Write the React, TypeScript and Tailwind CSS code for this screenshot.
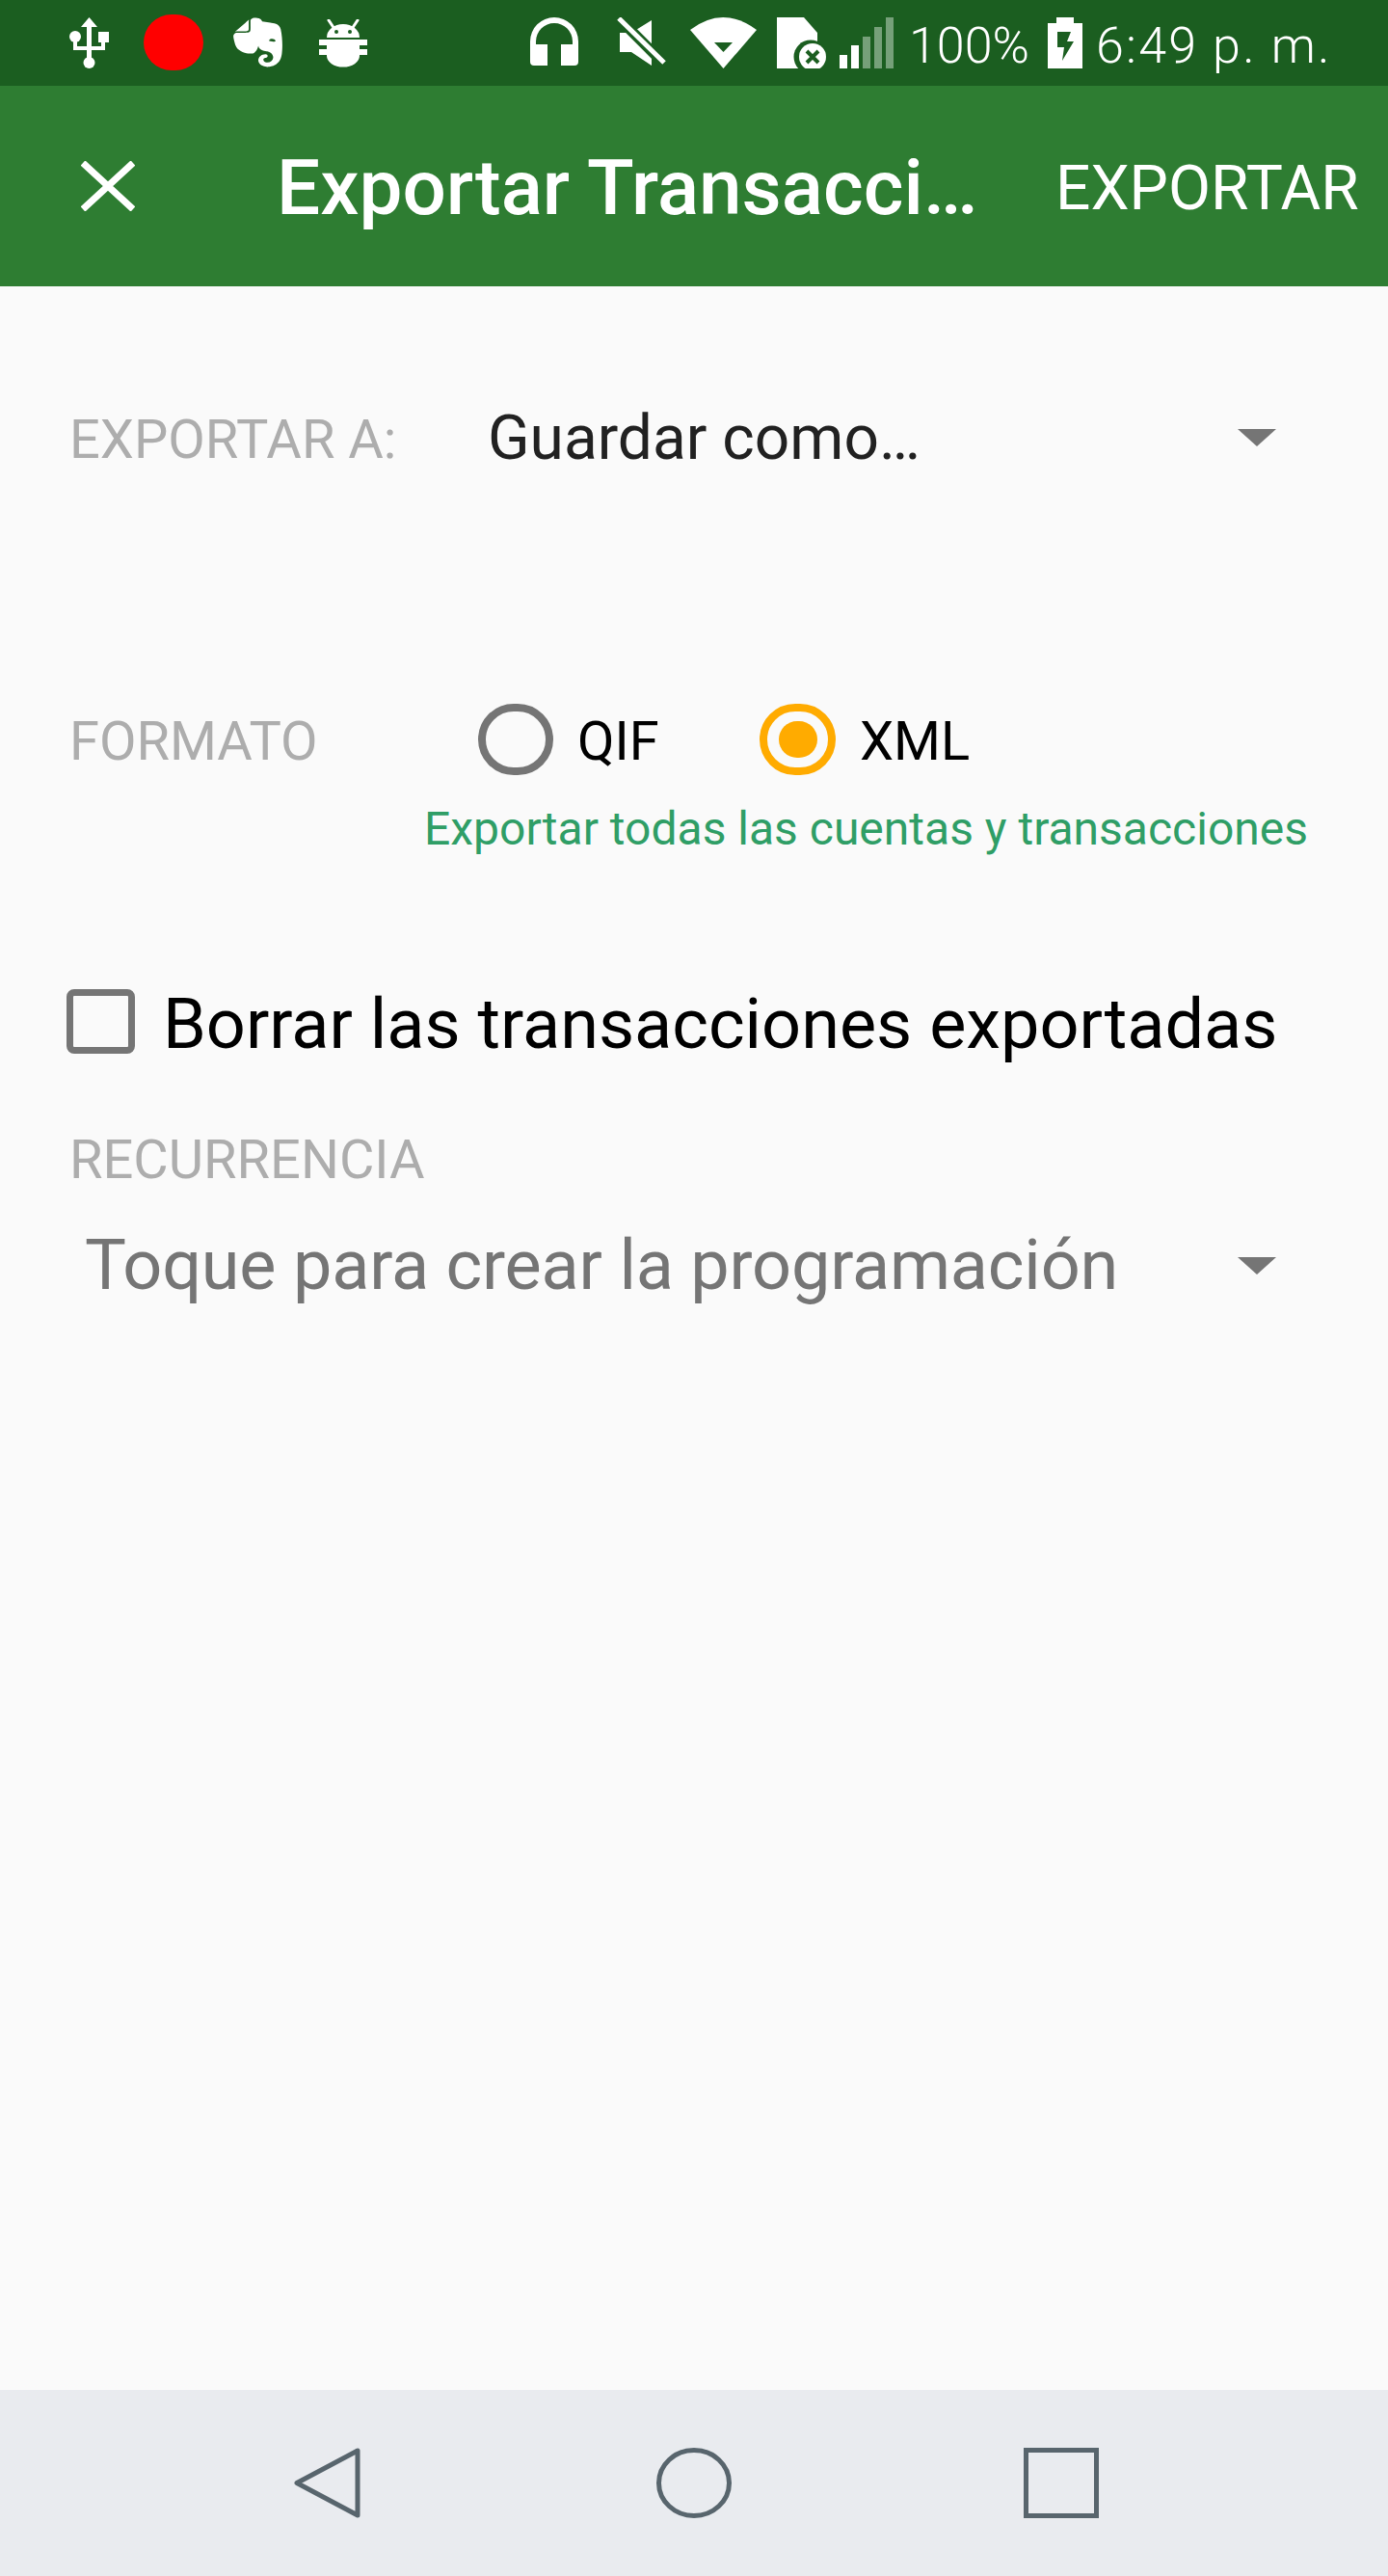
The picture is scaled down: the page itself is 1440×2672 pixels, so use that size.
import { FaEvernote } from 'react-icons/fa'

function DropArrow() {
  return (
    <svg width="40" height="18" viewBox="0 0 40 18" className="shrink-0">
      <path d="M0 0H40L20 18Z" fill="#757575" />
    </svg>
  )
}

function StatusBar() {
  return (
    <div className="h-[89px] shrink-0 bg-[#1b5e20] flex items-start pt-[15px] text-white">
      {/* usb */}
      <svg width="41" height="53" viewBox="0 0 41 53" className="ml-[72px] mt-[3px]" fill="#fff">
        <path d="M20.500 0L29 10H23V44H18V10H12Z" />
        <circle cx="20.500" cy="47" r="6" />
        <circle cx="6" cy="20" r="6" />
        <rect x="4" y="20" width="4" height="14" />
        <rect x="30" y="15" width="11" height="11" />
        <rect x="33" y="24" width="4" height="10" />
        <path d="M4 30H37V34H8Q4 34 4 30Z" />
      </svg>
      <div className="ml-[36px] w-[62px] h-[58px] rounded-full bg-[#ff0000]" />
      <FaEvernote preserveAspectRatio="none" className="ml-[31px] w-[51px] h-[58px]" />
      {/* android bug */}
      <svg width="50" height="50" viewBox="0 0 50 50" className="ml-[38px] mt-[5px]" fill="#fff">
        <path d="M10 1l6 9M40 1l-6 9" stroke="#fff" strokeWidth="3" strokeLinecap="round" />
        <path d="M8 19a17 14 0 0 1 34 0z" />
        <circle cx="18" cy="13" r="2" fill="#1b5e20" />
        <circle cx="32" cy="13" r="2" fill="#1b5e20" />
        <rect x="0" y="21" width="50" height="6" />
        <rect x="0" y="31" width="50" height="6" />
        <path d="M8 21H42V30H42V38a17 11.500 0 0 1-34 0z" />
      </svg>
      {/* headphones */}
      <svg width="50" height="50" viewBox="0 0 50 50" className="ml-[169px] mt-[3px]" fill="#fff">
        <path d="M0 25a25 25 0 0 1 50 0V46a4 4 0 0 1-4 4H32V28H44V25a19 19 0 0 0-38 0V28H18V50H4a4 4 0 0 1-4-4Z" />
      </svg>
      {/* muted speaker */}
      <svg width="52" height="52" viewBox="0 0 52 52" className="ml-[39px] mt-[3px]" fill="#fff">
        <path d="M4 16H16L37 3V50L16 36H4Z" />
        <path d="M2 0L50 48" stroke="#1b5e20" strokeWidth="11" />
        <path d="M3 1L50 47" stroke="#fff" strokeWidth="5" />
      </svg>
      {/* wifi */}
      <svg width="69" height="53" viewBox="0 0 69 53" className="ml-[25px] mt-[3px]" fill="#fff">
        <path d="M0 13Q34 -13 69 13L34.500 53Z" />
        <path d="M25 26H44L34.500 36Z" fill="#1b5e20" />
      </svg>
      {/* sim with x */}
      <svg width="52" height="53" viewBox="0 0 52 53" className="ml-[21px] mt-[3px]" fill="#fff">
        <path d="M0 0H28L42 16V53H0Z" />
        <circle cx="35" cy="41" r="17.500" fill="#1b5e20" />
        <circle cx="37" cy="41" r="14" />
        <path d="M31 35L43 47M43 35L31 47" stroke="#1b5e20" strokeWidth="4" />
      </svg>
      {/* signal bars */}
      <div className="ml-[13px] mt-[3px] h-[53px] flex items-end gap-[4px]">
        <div className="w-[8px] h-[14px] bg-white" />
        <div className="w-[8px] h-[24px] bg-white" />
        <div className="w-[8px] h-[33px] bg-[#76a079]" />
        <div className="w-[8px] h-[43px] bg-[#76a079]" />
        <div className="w-[8px] h-[53px] bg-[#76a079]" />
      </div>
      <span className="ml-[16px] mt-[5px] text-[52px] leading-[56px] font-light">100%</span>
      {/* battery charging */}
      <svg width="36" height="53" viewBox="0 0 36 53" className="ml-[19px] mt-[3px]" fill="#fff">
        <path d="M9 0H27V6H36V53H0V6H9Z" />
        <path d="M10 15H24L20 25H27L15 45L17 31H10Z" fill="#1b5e20" />
      </svg>
      <span className="ml-[14px] mt-[5px] text-[52px] leading-[56px] font-light tracking-[2.2px] whitespace-nowrap">6:49 p. m.</span>
    </div>
  )
}

function AppBar() {
  return (
    <div className="h-[208px] shrink-0 bg-[#2e7d32] flex items-center text-white">
      <svg width="56" height="52" viewBox="0 0 56 52" className="ml-[84px]">
        <path d="M2 2L54 50M54 2L2 50" stroke="#fff" strokeWidth="7" />
      </svg>
      <span className="ml-[147px] mt-[3px] w-[790px] text-[80px] leading-[90px] font-medium whitespace-nowrap">Exportar Transacci…</span>
      <span className="ml-[18px] mt-[5px] text-[64px] leading-[70px]">EXPORTAR</span>
    </div>
  )
}

function NavBar() {
  return (
    <div className="h-[193px] shrink-0 bg-[#e9ebef] flex items-start pt-[60px]">
      <svg width="69" height="73" viewBox="0 0 69 73" className="ml-[305px]">
        <path d="M66 3V70L3 36.500Z" fill="none" stroke="#58656d" strokeWidth="5" strokeLinejoin="round" />
      </svg>
      <svg width="78" height="73" viewBox="0 0 78 73" className="ml-[307px]">
        <ellipse cx="39" cy="36.500" rx="36.500" ry="34" fill="none" stroke="#58656d" strokeWidth="5" />
      </svg>
      <div className="ml-[303px] w-[78px] h-[73px] border-[5px] border-[#58656d]" />
    </div>
  )
}

export default function App() {
  return (
    <div className="w-[1440px] h-[2672px] flex flex-col bg-[#fafafa] font-['Roboto',sans-serif]">
      <StatusBar />
      <AppBar />
      <main className="flex-1 flex flex-col">
        {/* Exportar a */}
        <div className="mt-[127px] h-[60px] flex items-center pl-[72px]">
          <span className="w-[434px] mt-[3px] text-[56px] leading-[60px] text-[#adadad]">EXPORTAR A:</span>
          <span className="w-[778px] mt-[2px] text-[64px] leading-[60px] text-[#212121]">Guardar como…</span>
          <DropArrow />
        </div>

        {/* Formato */}
        <div className="mt-[246px] h-[74px] flex items-center pl-[72px]">
          <span className="w-[424px] mt-[3px] text-[56px] leading-[60px] text-[#adadad]">FORMATO</span>
          <div className="w-[78px] h-[74px] rounded-full border-[8px] border-[#757575]" />
          <span className="ml-[25px] mt-[3px] w-[189px] text-[56px] leading-[60px] text-black">QIF</span>
          <div className="w-[79px] h-[74px] rounded-full border-[8px] border-[#ffab00] flex items-center justify-center">
            <div className="w-[40px] h-[38px] rounded-full bg-[#ffab00]" />
          </div>
          <span className="ml-[25px] mt-[3px] text-[56px] leading-[60px] text-black">XML</span>
        </div>
        <p className="mt-[29px] pl-[440px] text-[48px] leading-[54px] text-[#2f9e66]">Exportar todas las cuentas y transacciones</p>

        {/* Borrar */}
        <div className="mt-[139px] h-[67px] flex items-center pl-[69px]">
          <div className="w-[71px] h-[67px] rounded-[8px] border-[7px] border-[#757575]" />
          <span className="ml-[29px] mt-[6px] text-[72px] leading-[67px] text-black whitespace-nowrap">Borrar las transacciones exportadas</span>
        </div>

        {/* Recurrencia */}
        <p className="mt-[80px] pl-[72px] text-[56px] leading-[60px] text-[#adadad]">RECURRENCIA</p>
        <div className="mt-[45px] h-[70px] flex items-center pl-[88px]">
          <span className="w-[1196px] text-[72px] leading-[70px] tracking-[-0.2px] text-[#757575] whitespace-nowrap">Toque para crear la programación</span>
          <DropArrow />
        </div>
      </main>
      <NavBar />
    </div>
  )
}
